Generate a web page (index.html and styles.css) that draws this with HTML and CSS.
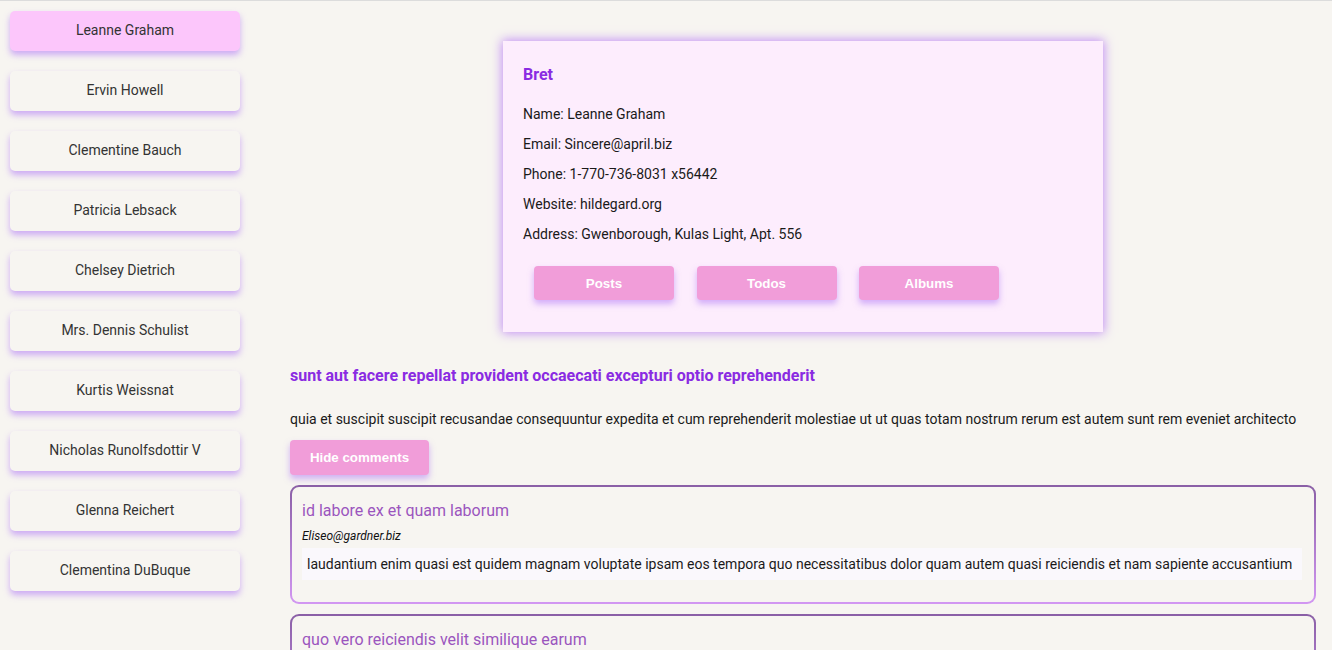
FILE: index.html
```html
<!DOCTYPE html>
<html>
<head>
<meta charset="utf-8">
<link rel="stylesheet" href="styles.css">
</head>
<body>
<div class="app">
  <nav class="sidebar">
    <button class="user active">Leanne Graham</button>
    <button class="user">Ervin Howell</button>
    <button class="user">Clementine Bauch</button>
    <button class="user">Patricia Lebsack</button>
    <button class="user">Chelsey Dietrich</button>
    <button class="user">Mrs. Dennis Schulist</button>
    <button class="user">Kurtis Weissnat</button>
    <button class="user">Nicholas Runolfsdottir V</button>
    <button class="user">Glenna Reichert</button>
    <button class="user">Clementina DuBuque</button>
  </nav>
  <main class="main">
    <section class="profile">
      <h3 class="username">Bret</h3>
      <p class="info">Name: Leanne Graham</p>
      <p class="info">Email: Sincere@april.biz</p>
      <p class="info">Phone: 1-770-736-8031 x56442</p>
      <p class="info">Website: hildegard.org</p>
      <p class="info">Address: Gwenborough, Kulas Light, Apt. 556</p>
      <div class="actions">
        <button class="pink-btn tab">Posts</button>
        <button class="pink-btn tab">Todos</button>
        <button class="pink-btn tab">Albums</button>
      </div>
    </section>
    <article class="post">
      <h4 class="post-title">sunt aut facere repellat provident occaecati excepturi optio reprehenderit</h4>
      <p class="post-body">quia et suscipit suscipit recusandae consequuntur expedita et cum reprehenderit molestiae ut ut quas totam nostrum rerum est autem sunt rem eveniet architecto</p>
      <button class="pink-btn hide">Hide comments</button>
      <div class="comment">
        <div class="c-title">id labore ex et quam laborum</div>
        <div class="c-email">Eliseo@gardner.biz</div>
        <div class="c-body">laudantium enim quasi est quidem magnam voluptate ipsam eos tempora quo necessitatibus dolor quam autem quasi reiciendis et nam sapiente accusantium</div>
      </div>
      <div class="comment">
        <div class="c-title">quo vero reiciendis velit similique earum</div>
        <div class="c-email">Jayne_Kuhic@sydney.com</div>
        <div class="c-body">est natus enim nihil est dolore omnis voluptatem numquam et omnis occaecati quod ullam at voluptatem error expedita pariatur</div>
      </div>
    </article>
  </main>
</div>
</body>
</html>
```
FILE: styles.css
```css
html, body {
  margin: 0;
  padding: 0;
  background: #f7f5f1;
}
body {
  border-top: 1px solid #dcdcdc;
  font-family: Roboto, "Liberation Sans", sans-serif;
  color: #1a1a1a;
}
.app {
  display: flex;
  align-items: flex-start;
}
.sidebar {
  width: 230px;
  flex: none;
  padding: 10px;
  display: flex;
  flex-direction: column;
  gap: 20px;
}
.user {
  height: 40px;
  border: none;
  border-radius: 5px;
  background: #f7f5f1;
  font-family: Roboto, "Liberation Sans", sans-serif;
  font-size: 14px;
  color: #333;
  box-shadow: 0 4px 6px rgba(170, 110, 245, 0.55);
  padding: 0 0 2px;
}
.user.active {
  background: #fcc6fb;
}
.main {
  flex: 1;
  padding: 40px 16px 0 40px;
  min-width: 0;
}
.profile {
  width: 600px;
  box-sizing: border-box;
  margin: 0 auto;
  background: #fdedfd;
  padding: 21px 20px 32px;
  box-shadow: 0 0 10px 1px rgba(180, 115, 245, 0.8);
}
.username {
  margin: 0 0 11px;
  font-size: 16px;
  line-height: 26px;
  font-weight: 700;
  color: #8a2be2;
}
.info {
  margin: 0;
  font-size: 14px;
  line-height: 30px;
}
.actions {
  display: flex;
  margin-top: 17px;
}
.pink-btn {
  border: none;
  border-radius: 4px;
  background: #f19dd9;
  color: #fff;
  font-family: "Liberation Sans", Arial, sans-serif;
  font-weight: 700;
  font-size: 13.333px;
  box-shadow: 0 4px 6px rgba(170, 110, 245, 0.5);
  padding: 0;
}
.tab {
  width: 140px;
  height: 34px;
  margin: 0 11.5px 0 11px;
}
.post {
  margin-top: 34px;
}
.post-title {
  margin: 0;
  font-size: 16px;
  line-height: 20px;
  font-weight: 700;
  color: #8a2be2;
}
.post-body {
  margin: 23px 0 0;
  font-size: 14px;
  line-height: 20px;
  white-space: nowrap;
}
.hide {
  display: block;
  width: 139px;
  height: 35px;
  margin-top: 11px;
}
.comment {
  margin-top: 10px;
  border: 2px solid transparent;
  border-radius: 9px;
  background: linear-gradient(#f7f5f1, #f7f5f1) padding-box,
              linear-gradient(#8a5fa6, #d297f2) border-box;
  padding: 14px 12px 22px 10px;
}
.c-title {
  font-size: 16px;
  line-height: 20px;
  color: #9b55be;
}
.c-email {
  margin-top: 8px;
  font-size: 12px;
  line-height: 15px;
  font-style: italic;
  color: #111;
}
.c-body {
  margin-top: 4px;
  background: #faf8fc;
  font-size: 14px;
  line-height: 18px;
  padding: 7px 5px;
  color: #1a1a1a;
}
```
